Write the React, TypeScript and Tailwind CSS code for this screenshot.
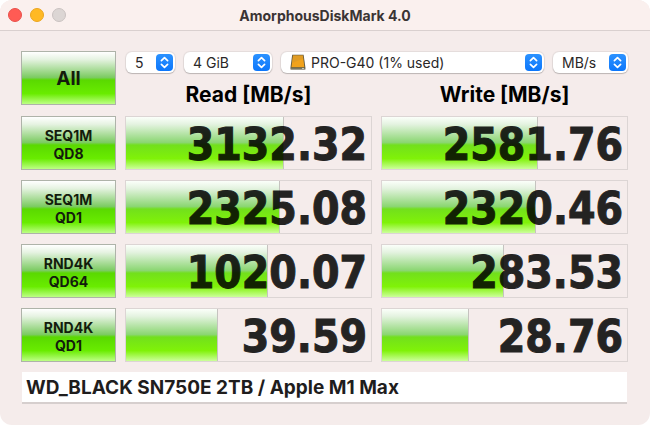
import { useState } from "react";
import type { ReactNode } from "react";

interface Result {
  test: string;
  queue: string;
  read: string;
  readFill: number;
  write: string;
  writeFill: number;
}

const results: Result[] = [
  { test: "SEQ1M", queue: "QD8", read: "3132.32", readFill: 64.5, write: "2581.76", writeFill: 63.5 },
  { test: "SEQ1M", queue: "QD1", read: "2325.08", readFill: 62.8, write: "2320.46", writeFill: 62.8 },
  { test: "RND4K", queue: "QD64", read: "1020.07", readFill: 57.8, write: "283.53", writeFill: 49.8 },
  { test: "RND4K", queue: "QD1", read: "39.59", readFill: 37.6, write: "28.76", writeFill: 35.6 },
];

function TitleBar() {
  return (
    <header className="grid h-[31px] grid-cols-[1fr_auto_1fr] items-center border-b border-[#d9d0cf] bg-[#faf0ee] px-2">
      <div className="flex gap-2">
        <button aria-label="Close" className="size-[14px] rounded-full border border-[#e8504a] bg-[#ff5b54]" />
        <button aria-label="Minimize" className="size-[14px] rounded-full border border-[#eaa51f] bg-[#ffb924]" />
        <button aria-label="Zoom" disabled className="size-[14px] rounded-full border border-[#c9c2c0] bg-[#dcd6d4]" />
      </div>
      <h1 className="text-[14px] font-bold text-[#3a3434]">AmorphousDiskMark 4.0</h1>
    </header>
  );
}

function Picker({ label, options, className, selectClassName = "pl-[9px]", icon }: {
  label: string;
  options: string[];
  className: string;
  selectClassName?: string;
  icon?: ReactNode;
}) {
  return (
    <div className={`relative ${className}`}>
      <select
        aria-label={label}
        className={`block h-[21px] w-full appearance-none rounded-[6px] bg-white pr-6 text-[14px] leading-[21px] text-[#2a2727] shadow-[0_0_1px_1px_rgba(0,0,0,0.07),0_1px_1px_rgba(0,0,0,0.18)] ${selectClassName}`}
      >
        {options.map((option) => (
          <option key={option}>{option}</option>
        ))}
      </select>
      {icon}
      <span className="pointer-events-none absolute top-[2px] right-[2px] flex h-[17px] w-[17px] items-center justify-center rounded-[4px] bg-linear-to-b from-[#2b92ff] to-[#0a76fb]">
        <svg viewBox="0 0 17 17" className="size-[17px]" fill="none" stroke="#fff" strokeWidth="1.7" strokeLinecap="round" strokeLinejoin="round">
          <path d="M5.4 6.7 8.5 3.7l3.1 3M5.4 10.3l3.1 3 3.1-3" />
        </svg>
      </span>
    </div>
  );
}

function DriveIcon() {
  return (
    <svg viewBox="0 0 16 17" className="pointer-events-none absolute top-[2px] left-[9px] h-[17px] w-4">
      <path d="M2.2.8h11.4l1.8 12.6v2.2H.5v-2.2z" fill="#5c553f" />
      <path d="M3 1.4h9.9l1.5 11.8H1.4z" fill="#f0a21c" />
      <path d="M3 1.4h9.9l.4 3.2L2.2 9z" fill="#d99a2a" opacity=".7" />
      <path d="M1 13.7h14v1.5H1z" fill="#77765f" />
      <path d="M12 14h2v.9h-2z" fill="#c9c9b8" />
    </svg>
  );
}

function RunButton({ children, className }: { children: ReactNode; className: string }) {
  return (
    <button
      className={`h-[54px] w-full border border-[#aeb3a9] bg-[linear-gradient(to_bottom,#ffffff_0%,#e6f3e2_14%,#7ccb62_49%,#5ad900_54%,#69ec00_80%,#bdff85_100%)] pt-[3px] font-bold text-[#131c0c] ${className}`}
    >
      {children}
    </button>
  );
}

function Meter({ label, value, fill }: { label: string; value: string; fill: number }) {
  return (
    <div
      role="meter"
      aria-label={label}
      aria-valuenow={Number(value)}
      className="grid h-[54px] border border-[#dcd5d4] bg-[#f5eceb]"
    >
      <div
        className="border-r border-[#c5c3bf] bg-[linear-gradient(to_bottom,#fbfffa_0%,#e4f3e0_14%,#8bd672_49%,#72e01c_54%,#80f208_80%,#ccff9b_100%)] [grid-area:1/1]"
        style={{ width: `${fill}%` }}
      />
      <span className="pt-1 pr-1 text-right font-['DejaVu_Sans_Condensed','DejaVu_Sans',sans-serif] text-[44px] leading-[48px] font-bold text-black opacity-85 [-webkit-text-stroke:1px_black] [grid-area:1/1]">
        {value}
      </span>
    </div>
  );
}

export default function App() {
  const [note, setNote] = useState("WD_BLACK SN750E 2TB / Apple M1 Max");

  return (
    <div className="min-h-screen bg-white font-['Inter',sans-serif]">
      <div className="min-h-screen overflow-hidden rounded-[12px] bg-[#f5eceb]">
        <TitleBar />
        <main className="pt-5 pr-[22px] pb-5 pl-[21px]">
          <div className="grid grid-cols-[95px_1fr_1fr] gap-x-[9px]">
            <RunButton className="text-[19px]">All</RunButton>
            <div className="col-span-2 flex flex-col gap-[10px] pt-px">
              <div className="flex gap-[9px] pl-px">
                <Picker label="Test count" options={["5", "1", "3", "9"]} className="w-[49px]" />
                <Picker label="Test size" options={["4 GiB", "1 GiB", "8 GiB"]} className="w-[88px]" />
                <Picker
                  label="Target drive"
                  options={["PRO-G40 (1% used)"]}
                  className="flex-1"
                  selectClassName="pl-[30px]"
                  icon={<DriveIcon />}
                />
                <Picker label="Unit" options={["MB/s", "GB/s", "IOPS"]} className="w-[75px]" />
              </div>
              <div className="grid grid-cols-2 gap-[9px] text-center text-[21px] leading-6 font-bold text-black">
                <h2>Read [MB/s]</h2>
                <h2>Write [MB/s]</h2>
              </div>
            </div>
          </div>

          <div className="mt-[9px] flex flex-col gap-[10px]">
            {results.map((row) => (
              <div key={row.test + row.queue} className="grid grid-cols-[95px_1fr_1fr] gap-x-[9px]">
                <RunButton className="text-[14px] leading-[18px]">
                  {row.test}
                  <br />
                  {row.queue}
                </RunButton>
                <Meter label={`${row.test} ${row.queue} read`} value={row.read} fill={row.readFill} />
                <Meter label={`${row.test} ${row.queue} write`} value={row.write} fill={row.writeFill} />
              </div>
            ))}
          </div>

          <div className="mt-[10px] px-px">
            <input
              aria-label="Comment"
              value={note}
              onChange={(e) => setNote(e.target.value)}
              className="block h-8 w-full border-b-2 border-[#d6cfce] bg-white px-1 text-[19px] font-bold text-[#1f1d1d] outline-none"
            />
          </div>
        </main>
      </div>
    </div>
  );
}
